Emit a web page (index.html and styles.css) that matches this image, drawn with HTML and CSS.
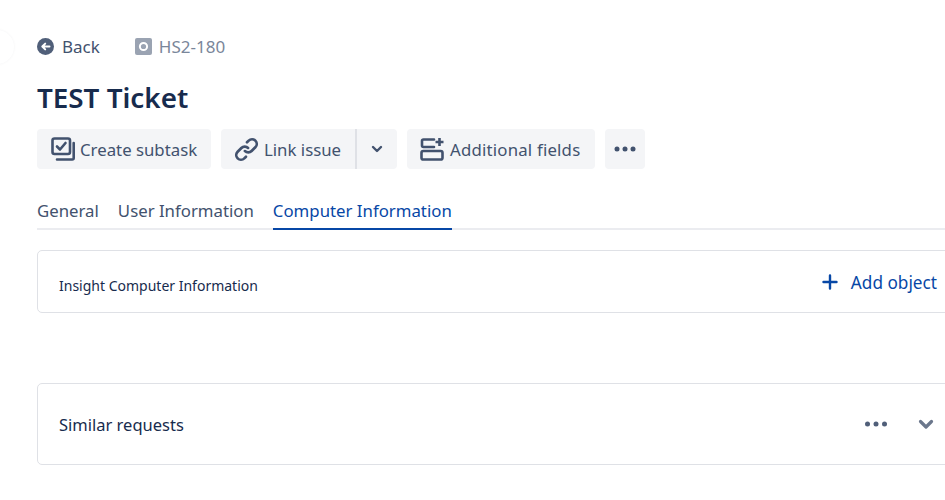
FILE: index.html
```html
<!DOCTYPE html>
<html lang="en">
<head>
<meta charset="utf-8">
<title>TEST Ticket</title>
<link rel="stylesheet" href="styles.css">
</head>
<body>
<div class="edge-handle"><svg width="6" height="14" viewBox="0 0 6 14"><circle cx="1" cy="4" r="1.2"/><circle cx="1" cy="10" r="1.2"/></svg></div>
<main class="page">
  <div class="crumbs">
    <a class="back">
      <svg class="back-icon" width="17" height="17" viewBox="0 0 17 17"><circle cx="8.5" cy="8.5" r="8.5" fill="#505f79"/><path d="M12.5 8.5H5.5M8.2 5.6 5.3 8.5l2.9 2.9" fill="none" stroke="#fff" stroke-width="2" stroke-linecap="round" stroke-linejoin="round"/></svg>
      <span>Back</span>
    </a>
    <span class="key">
      <svg width="17" height="17" viewBox="0 0 17 17"><rect width="17" height="17" rx="2" fill="#9aa3b2"/><circle cx="8.5" cy="8.5" r="3.6" fill="none" stroke="#fff" stroke-width="2"/></svg>
      <span>HS2-180</span>
    </span>
  </div>
  <h1 class="title">TEST Ticket</h1>
  <div class="actions">
    <button class="btn btn-subtask">
      <svg width="24" height="24" viewBox="0 0 24 24" fill="none" stroke="#42526e" stroke-width="2.6" stroke-linecap="round" stroke-linejoin="round"><rect x="1.500" y="1.500" width="17.500" height="15.500" rx="2"/><path d="M6 9.500l3 3 5.500-6.500"/><path d="M22.700 6v15a1.500 1.500 0 0 1-1.500 1.500H6"/></svg>
      <span>Create subtask</span>
    </button>
    <div class="split">
      <button class="btn btn-left">
        <svg width="25" height="25" viewBox="0 0 24 24" fill="none" stroke="#42526e" stroke-width="2.6" stroke-linecap="round"><path d="M10.5 13.5a4.5 4.5 0 0 0 6.4 0l3.6-3.6a4.5 4.5 0 0 0-6.4-6.4l-1.6 1.6"/><path d="M13.5 10.5a4.5 4.5 0 0 0-6.4 0l-3.6 3.6a4.5 4.5 0 0 0 6.4 6.4l1.6-1.6"/></svg>
        <span>Link issue</span>
      </button>
      <button class="btn btn-right" aria-label="More">
        <svg width="12" height="8" viewBox="0 0 12 8" fill="none" stroke="#42526e" stroke-width="2.4" stroke-linecap="round" stroke-linejoin="round"><path d="M2 2l4 4 4-4"/></svg>
      </button>
    </div>
    <button class="btn btn-fields">
      <svg width="24" height="24" viewBox="0 0 24 24" fill="none" stroke="#42526e" stroke-width="2.6" stroke-linecap="round" stroke-linejoin="round"><path d="M14 2.500H3.500A1.500 1.500 0 0 0 2 4V8.500A1.500 1.500 0 0 0 3.500 10H14"/><rect x="1.500" y="14" width="21" height="8.500" rx="1.800"/><path d="M19.500 1v8M15.500 5h8" stroke-linecap="butt"/></svg>
      <span>Additional fields</span>
    </button>
    <button class="btn btn-dots" aria-label="More actions">
      <svg width="24" height="6" viewBox="0 0 24 6" fill="#42526e"><circle cx="4" cy="3" r="2.500"/><circle cx="12" cy="3" r="2.500"/><circle cx="20" cy="3" r="2.500"/></svg>
    </button>
  </div>
  <nav class="tabs">
    <a class="tab">General</a>
    <a class="tab">User Information</a>
    <a class="tab tab-active">Computer Information</a>
  </nav>
  <section class="card card-insight">
    <span class="insight-label">Insight Computer Information</span>
    <a class="add">
      <svg width="16" height="16" viewBox="0 0 16 16" fill="none" stroke="#0747a6" stroke-width="2.400" stroke-linecap="round"><path d="M8 1.500v13M1.500 8h13"/></svg>
      <span>Add object</span>
    </a>
  </section>
  <section class="card card-similar">
    <h2 class="similar-label">Similar requests</h2>
    <div class="card-tools">
      <svg width="24" height="6" viewBox="0 0 24 6" fill="#505f79"><circle cx="3.500" cy="3" r="2.500"/><circle cx="12" cy="3" r="2.500"/><circle cx="20.500" cy="3" r="2.500"/></svg>
      <svg width="16" height="11" viewBox="0 0 16 11" fill="none" stroke="#6b778c" stroke-width="3.200" stroke-linecap="round" stroke-linejoin="round"><path d="M2.500 2.500 8 8l5.500-5.500"/></svg>
    </div>
  </section>
</main>
</body>
</html>
```
FILE: styles.css
```css
* { box-sizing: border-box; }
html, body { margin: 0; height: 100%; overflow: hidden; background: #fff; }
body { font-family: "Noto Sans", "Open Sans", sans-serif; color: #172b4d; position: relative; }
.edge-handle { position: absolute; left: -20px; top: 30px; width: 34px; height: 34px; border-radius: 50%; background: #fff; box-shadow: 0 0 3px rgba(9,30,66,.05); display: flex; align-items: center; justify-content: flex-end; padding-right: 12px; }
.edge-handle svg { fill: #ebecf0; }
.page { width: 957px; padding: 35px 0 0 37px; }
.crumbs { display: flex; align-items: center; height: 22px; gap: 35px; font-size: 17px; }
.back { display: flex; align-items: center; gap: 8px; color: #42526e; }
.key { display: flex; align-items: center; gap: 7px; color: #7a869a; }
.title { margin: 20px 0 0; font-size: 27.8px; line-height: 40px; font-weight: 600; color: #172b4d; }
.actions { display: flex; gap: 10px; margin-top: 12px; }
.btn { height: 40px; border: 0; border-radius: 4px; background: #f4f5f7; color: #42526e; font: inherit; font-size: 16.8px; white-space: nowrap; display: flex; align-items: center; gap: 5px; padding: 0 0 0 13px; flex: none; }
.btn svg { flex: none; }
.btn-subtask { padding-left: 14px; width: 174px; }
.btn-fields { gap: 6px; width: 188px; letter-spacing: .2px; }
.split { display: flex; }
.btn-left { border-radius: 4px 0 0 4px; width: 134px; }
.btn-right { border-radius: 0 4px 4px 0; width: 42px; padding: 0; justify-content: center; border-left: 2px solid #dfe1e6; }
.btn-dots { width: 40px; padding: 0; justify-content: center; }
.tabs { display: flex; gap: 19px; margin-top: 29px; border-bottom: 2px solid #ebecf0; font-size: 16.8px; color: #42526e; height: 32px; }
.tab { height: 32px; line-height: 26px; }
.tab-active { color: #0747a6; border-bottom: 2px solid #0747a6; }
.card { border: 1px solid #dfe1e6; border-radius: 5px; display: flex; align-items: center; justify-content: space-between; width: 920px; }
.card-insight { height: 63px; margin-top: 20px; padding: 4px 0 0 21px; }
.insight-label { font-size: 14px; margin-top: 4px; }
.add { display: flex; align-items: center; gap: 13px; margin-right: 19px; margin-top: -3px; color: #0747a6; font-size: 17.2px; }
.card-similar { height: 82px; margin-top: 70px; padding-left: 21px; }
.similar-label { margin: 0; font-size: 16.5px; font-weight: 400; }
.card-tools { display: flex; align-items: center; gap: 30px; margin-right: 22px; }
```
